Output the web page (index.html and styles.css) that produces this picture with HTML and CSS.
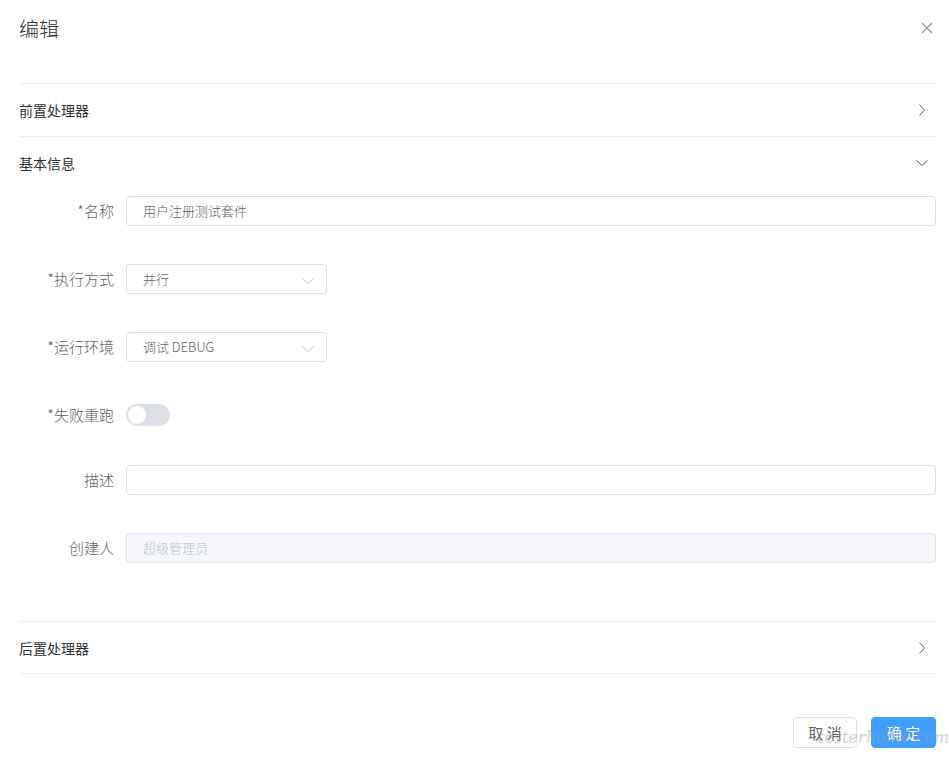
FILE: index.html
```html
<html><head>
    <title>编辑</title>
    <meta charset="UTF-8">
    <meta name="viewport" content="width=device-width, initial-scale=1">
    <link rel="stylesheet" href="styles.css">
</head>
<body>
<div class="dialog">
  <div class="dialog-header">
    <span class="dialog-title">编辑</span>
    <svg class="close" width="12" height="12" viewBox="0 0 12 12"><path d="M1 1L11 11M11 1L1 11" stroke="#909399" stroke-width="1.2" fill="none"/></svg>
  </div>
  <div class="dialog-body">
    <div class="collapse">
      <div class="collapse-item">
        <div class="collapse-header">
          <span>前置处理器</span>
          <svg class="arrow" width="12" height="12" viewBox="0 0 12 12"><path d="M3.5 0.5L8.5 6L3.5 11.5" stroke="#606266" stroke-width="1" fill="none"/></svg>
        </div>
      </div>
      <div class="collapse-item">
        <div class="collapse-header">
          <span>基本信息</span>
          <svg class="arrow" width="12" height="12" viewBox="0 0 12 12"><path d="M0.5 3.5L6 8.5L11.5 3.5" stroke="#606266" stroke-width="1" fill="none"/></svg>
        </div>
        <div class="collapse-content">
          <div class="form-item">
            <label class="label">*名称</label>
            <div class="input">用户注册测试套件</div>
          </div>
          <div class="form-item">
            <label class="label">*执行方式</label>
            <div class="input select">并行
              <svg class="caret" width="12" height="8" viewBox="0 0 12 8"><path d="M0.5 1.5L6 6.5L11.5 1.5" stroke="#c0c4cc" stroke-width="1" fill="none"/></svg>
            </div>
          </div>
          <div class="form-item">
            <label class="label">*运行环境</label>
            <div class="input select">调试 DEBUG
              <svg class="caret" width="12" height="8" viewBox="0 0 12 8"><path d="M0.5 1.5L6 6.5L11.5 1.5" stroke="#c0c4cc" stroke-width="1" fill="none"/></svg>
            </div>
          </div>
          <div class="form-item switch-row">
            <label class="label">*失败重跑</label>
            <span class="switch"><span class="switch-dot"></span></span>
          </div>
          <div class="form-item">
            <label class="label">描述</label>
            <div class="input"></div>
          </div>
          <div class="form-item">
            <label class="label">创建人</label>
            <div class="input disabled">超级管理员</div>
          </div>
        </div>
      </div>
      <div class="collapse-item">
        <div class="collapse-header last">
          <span>后置处理器</span>
          <svg class="arrow" width="12" height="12" viewBox="0 0 12 12"><path d="M3.5 0.5L8.5 6L3.5 11.5" stroke="#606266" stroke-width="1" fill="none"/></svg>
        </div>
      </div>
    </div>
  </div>
  <div class="dialog-footer">
    <button class="btn">取 消</button>
    <button class="btn primary">确 定</button>
  </div>
</div>
<div class="watermark">testerhome.com</div>
</body></html>
```

FILE: styles.css
```css
body {
  margin: 0;
  background: #fff;
  font-family: "Noto Sans CJK SC", "Noto Sans", sans-serif;
  font-weight: 300;
  color: #303133;
  overflow: hidden;
}
.dialog {
  padding: 0 13px 0 19px;
}
.dialog-header {
  height: 56px;
  display: flex;
  align-items: center;
  justify-content: space-between;
}
.dialog-title {
  font-size: 20px;
  color: #303133;
}
.close {
  margin-right: 3px;
}
.dialog-body {
  padding-top: 27px;
}
.collapse {
  border-top: 1px solid #ebeef5;
}
.collapse-item {
  border-bottom: 1px solid #ebeef5;
}
.collapse-header {
  height: 52px;
  display: flex;
  align-items: center;
  justify-content: space-between;
  font-size: 14px;
  font-weight: 400;
  color: #303133;
}
.collapse-header.last {
  height: 51px;
}
.arrow {
  margin-right: 8px;
}
.collapse-content {
  padding: 7px 0 20px;
}
.form-item {
  display: flex;
  align-items: center;
  height: 30px;
  margin-bottom: 38px;
}
.switch-row {
  margin-bottom: 35px;
}
.label {
  width: 95px;
  padding-right: 12px;
  text-align: right;
  font-size: 15px;
  line-height: 28px;
  color: #606266;
}
.input {
  flex: 1;
  height: 30px;
  box-sizing: border-box;
  border: 1px solid #dcdfe6;
  border-radius: 4px;
  padding: 0 15px 1px 16px;
  display: flex;
  align-items: center;
  font-size: 13px;
  color: #606266;
}
.select {
  flex: none;
  width: 201px;
  justify-content: space-between;
  padding-right: 12px;
}
.caret {
  margin-top: 4px;
}
.disabled {
  background: #f5f7fa;
  border-color: #e4e7ed;
  color: #c0c4cc;
}
.switch {
  width: 44px;
  height: 22px;
  border-radius: 11px;
  background: #dcdfe6;
  display: flex;
  align-items: center;
  padding-left: 2px;
  box-sizing: border-box;
}
.switch-dot {
  width: 18px;
  height: 18px;
  border-radius: 50%;
  background: #fff;
}
.dialog-footer {
  display: flex;
  justify-content: flex-end;
  gap: 14px;
  padding-top: 43px;
}
.btn {
  height: 31px;
  width: 64px;
  border: 1px solid #dcdfe6;
  border-radius: 4px;
  background: #fff;
  color: #606266;
  font-family: inherit;
  font-weight: 400;
  font-size: 15px;
  padding: 0;
}
.btn.primary {
  width: 65px;
  background: #409eff;
  border-color: #409eff;
  color: #fff;
}
.watermark {
  position: absolute;
  left: 818px;
  top: 728px;
  font-family: "DejaVu Serif", serif;
  font-style: italic;
  font-size: 16px;
  color: rgba(160, 160, 160, 0.5);
  white-space: nowrap;
}
```
